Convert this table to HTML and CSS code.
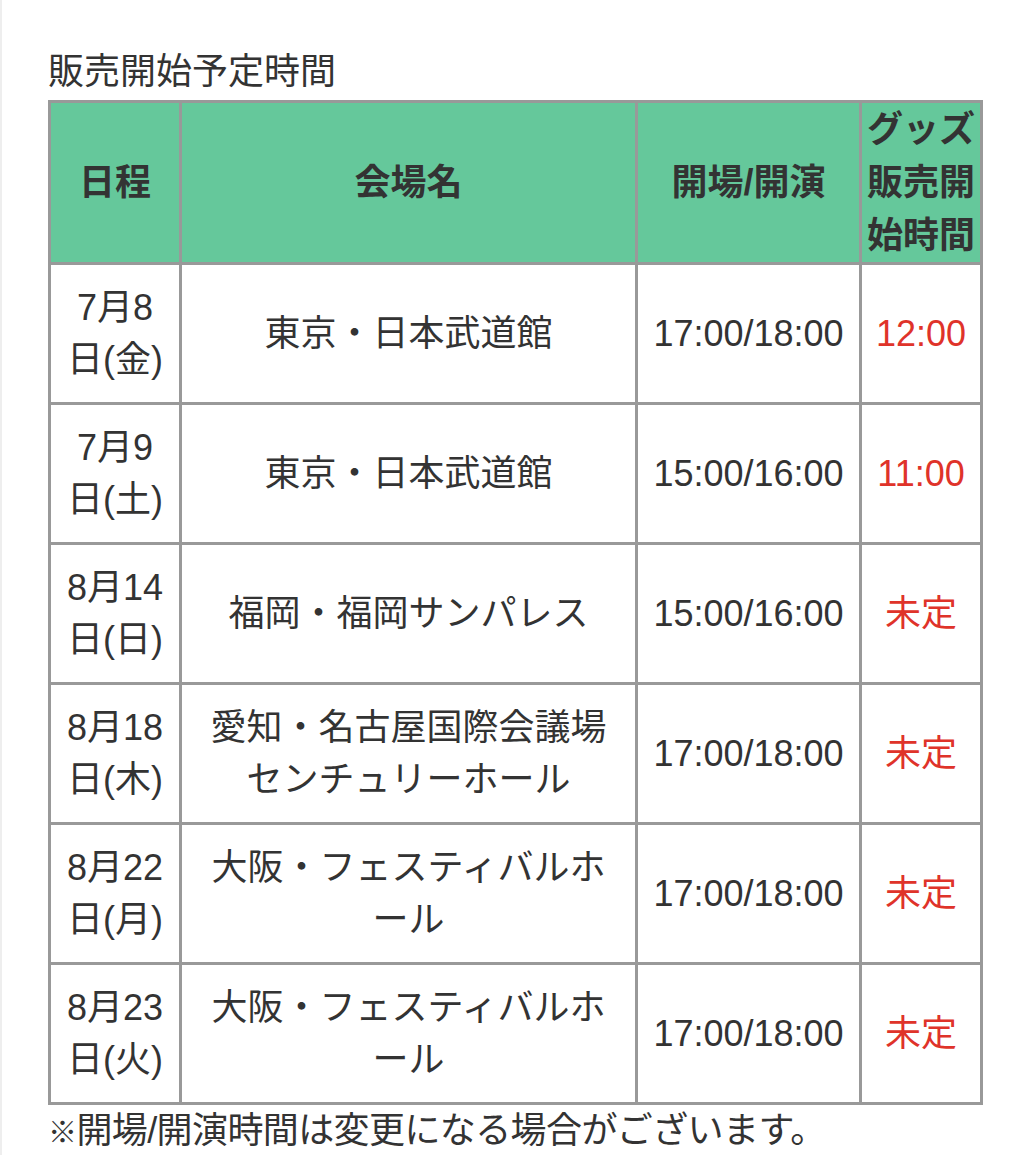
FILE: index.html
```html
<!DOCTYPE html>
<html lang="ja">
<head>
<meta charset="utf-8">
<title>販売開始予定時間</title>
<link rel="stylesheet" href="styles.css">
</head>
<body>
<div class="page">
  <p class="title">販売開始予定時間</p>
  <table class="schedule">
    <colgroup>
      <col class="c-date">
      <col class="c-venue">
      <col class="c-time">
      <col class="c-goods">
    </colgroup>
    <thead>
      <tr>
        <th>日程</th>
        <th>会場名</th>
        <th>開場/開演</th>
        <th>グッズ<br>販売開<br>始時間</th>
      </tr>
    </thead>
    <tbody>
      <tr>
        <td>7月8<br>日(金)</td>
        <td>東京・日本武道館</td>
        <td>17:00/18:00</td>
        <td class="red">12:00</td>
      </tr>
      <tr>
        <td>7月9<br>日(土)</td>
        <td>東京・日本武道館</td>
        <td>15:00/16:00</td>
        <td class="red">11:00</td>
      </tr>
      <tr>
        <td>8月14<br>日(日)</td>
        <td>福岡・福岡サンパレス</td>
        <td>15:00/16:00</td>
        <td class="red">未定</td>
      </tr>
      <tr>
        <td>8月18<br>日(木)</td>
        <td>愛知・名古屋国際会議場<br>センチュリーホール</td>
        <td>17:00/18:00</td>
        <td class="red">未定</td>
      </tr>
      <tr>
        <td>8月22<br>日(月)</td>
        <td>大阪・フェスティバルホ<br>ール</td>
        <td>17:00/18:00</td>
        <td class="red">未定</td>
      </tr>
      <tr>
        <td>8月23<br>日(火)</td>
        <td>大阪・フェスティバルホ<br>ール</td>
        <td>17:00/18:00</td>
        <td class="red">未定</td>
      </tr>
    </tbody>
  </table>
  <p class="note"><span class="mark">※</span>開場/開演時間は変更になる場合がございます。</p>
</div>
</body>
</html>
```

FILE: styles.css
```css
html, body {
  margin: 0;
  padding: 0;
  background: #ffffff;
}

body {
  font-family: "Liberation Sans", "Noto Sans CJK JP", sans-serif;
  color: #333333;
  font-size: 36px;
  line-height: 52px;
}

.page {
  min-height: 1155px;
  box-sizing: border-box;
  border-left: 2px solid #eeeeee;
  padding: 46px 0 0 46px;
}

.title {
  margin: 0 0 2px 0;
  font-size: 36px;
  line-height: 52px;
}

.schedule {
  border-collapse: collapse;
  table-layout: fixed;
  width: 932px;
}

.c-date { width: 131px; }
.c-venue { width: 456px; }
.c-time { width: 224px; }
.c-goods { width: 121px; }

.schedule th,
.schedule td {
  border: 3px solid #999999;
  padding: 0;
  text-align: center;
  vertical-align: middle;
  white-space: nowrap;
}

.schedule th {
  background: #65c89b;
  font-weight: bold;
  height: 159px;
  line-height: 53px;
}

.schedule td {
  height: 137px;
}

.schedule td.red {
  color: #df332a;
}

.note {
  margin: 0;
  font-size: 36px;
  line-height: 52px;
  letter-spacing: -0.6px;
}

.note .mark {
  font-size: 29px;
}
```
